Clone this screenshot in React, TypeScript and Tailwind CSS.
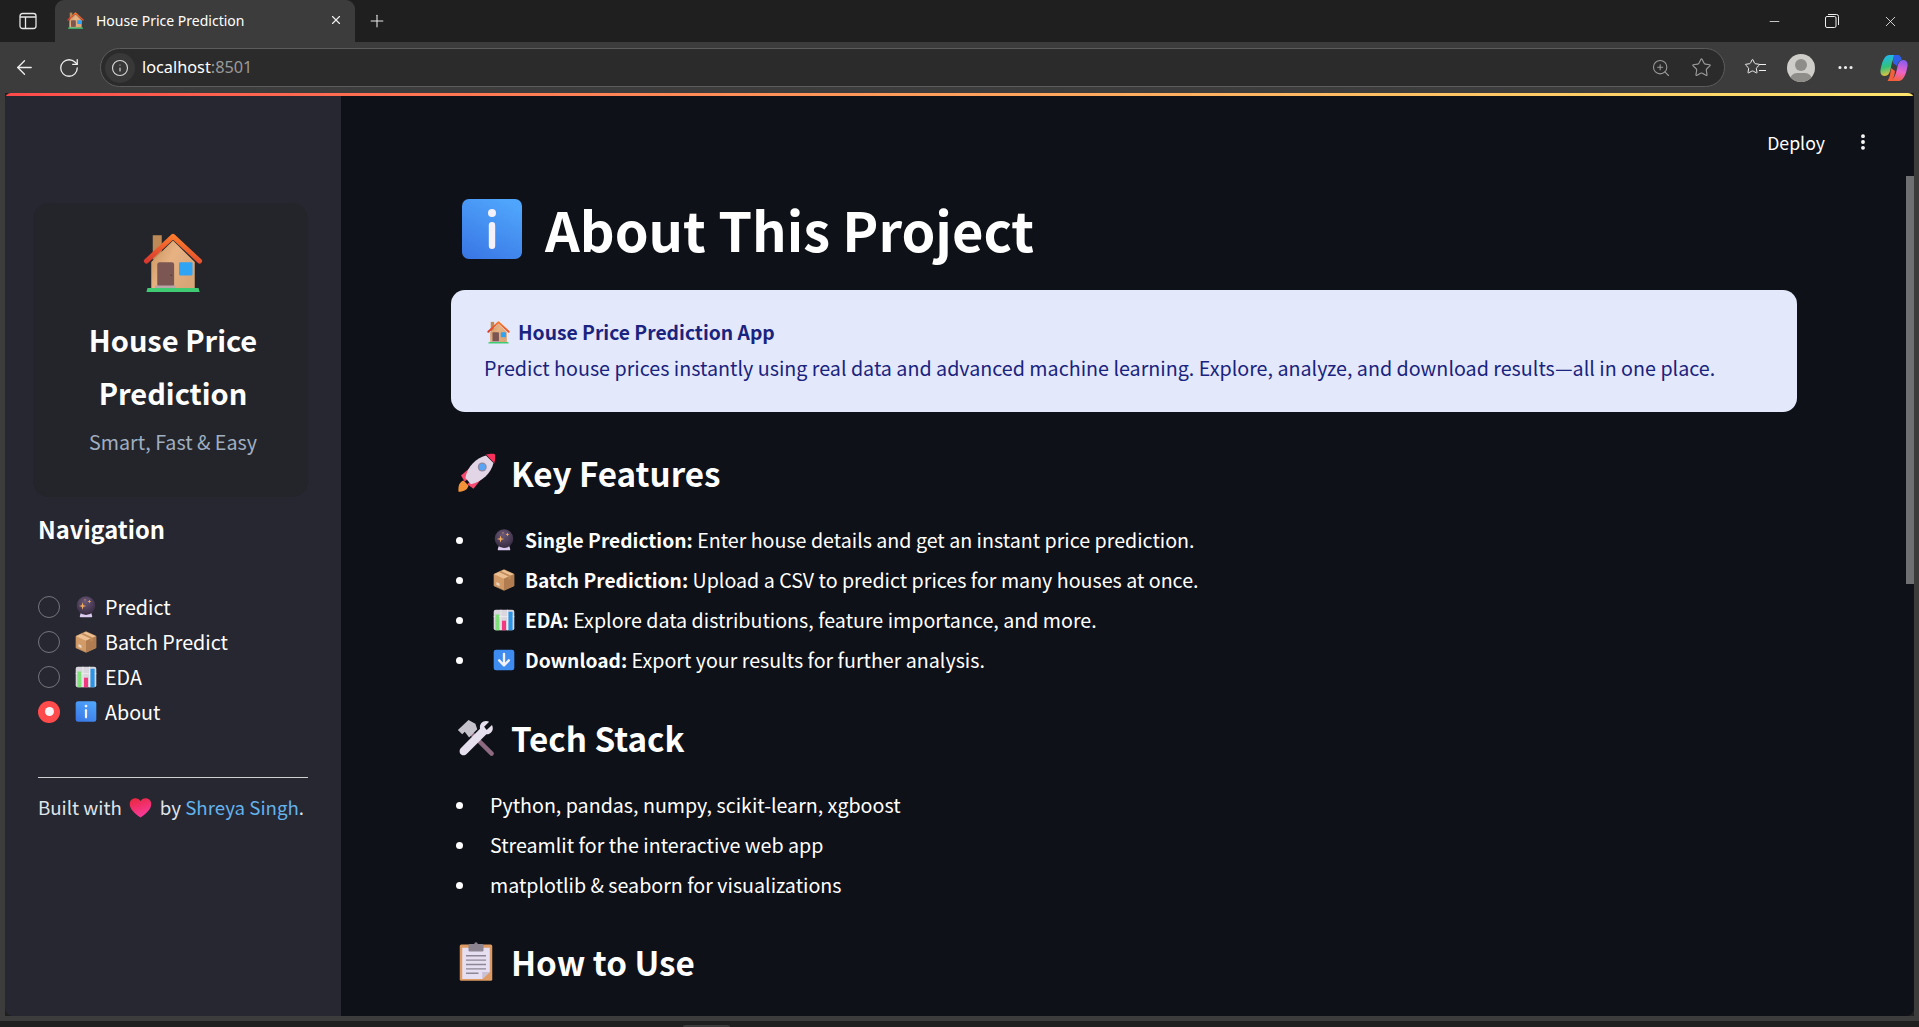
import { useId } from "react";
import { ArrowLeft, RotateCw, Info, ZoomIn, Star, Plus, X, Minus, MoreHorizontal, EllipsisVertical } from "lucide-react";

const useGid = () => useId().replace(/[^a-zA-Z0-9]/g, "");

function HouseEmoji({ className }: { className: string }) {
    const id = useGid();
    return (
        <svg viewBox="0 0 32 32" className={className}>
            <defs>
                <linearGradient id={`${id}w`} x1="0" y1="0" x2="1" y2="0.6">
                    <stop offset="0" stopColor="#c4905a" />
                    <stop offset="0.5" stopColor="#e8b283" />
                    <stop offset="1" stopColor="#d9a678" />
                </linearGradient>
                <linearGradient id={`${id}r`} x1="0" y1="1" x2="0.5" y2="0">
                    <stop offset="0" stopColor="#d9382e" />
                    <stop offset="1" stopColor="#fb7a2c" />
                </linearGradient>
            </defs>
            <rect x="5.2" y="1.2" width="4.8" height="13" fill="#bd8a57" />
            <path d="M16 4 L27.6 15.5 V29.5 H4.4 V15.5 Z" fill={`url(#${id}w)`} />
            <path d="M1.8 15 L16 1.8 L30.2 15" fill="none" stroke={`url(#${id}r)`} strokeWidth="2.6" strokeLinecap="round" strokeLinejoin="round" />
            <rect x="7.6" y="15.6" width="9" height="13" rx="1.2" fill="#7c5652" />
            <circle cx="15" cy="22.5" r="0.4" fill="#4b2f2d" />
            <rect x="19.2" y="15.6" width="7.2" height="7" rx="0.6" fill="#2fa4f5" />
            <rect x="6.4" y="28" width="11" height="1.4" fill="#b9a6a6" />
            <path d="M2.4 29.3 H29.6 L30.2 31.4 H1.8 Z" fill="#3fcb71" />
        </svg>
    );
}

function BallEmoji({ className }: { className: string }) {
    const id = useGid();
    return (
        <svg viewBox="0 0 32 32" className={className}>
            <defs>
                <radialGradient id={`${id}b`} cx="0.45" cy="0.3" r="0.75">
                    <stop offset="0" stopColor="#6a5878" />
                    <stop offset="1" stopColor="#33283d" />
                </radialGradient>
            </defs>
            <path d="M9 23 H23 L25 29 Q25.5 31 23.5 31 H8.5 Q6.5 31 7 29 Z" fill="#dccbf0" />
            <circle cx="16" cy="14" r="13.5" fill={`url(#${id}b)`} />
            <path d="M11 9 L12.2 13.3 L16.5 14.5 L12.2 15.7 L11 20 L9.8 15.7 L5.5 14.5 L9.8 13.3 Z" fill="#f3ad61" />
            <path d="M21 5 l0.8 2.2 l2.2 0.8 l-2.2 0.8 l-0.8 2.2 l-0.8 -2.2 l-2.2 -0.8 l2.2 -0.8 Z" fill="#f3ad61" />
            <circle cx="14.5" cy="5.5" r="0.9" fill="#f3ad61" />
        </svg>
    );
}

function BoxEmoji({ className }: { className: string }) {
    return (
        <svg viewBox="0 0 32 32" className={className}>
            <path d="M16 1 L30.5 7.5 V24.5 L16 31 L1.5 24.5 V7.5 Z" fill="#d19a66" stroke="#d19a66" strokeWidth="1" strokeLinejoin="round" />
            <path d="M16 1 L30.5 7.5 L16 14 L1.5 7.5 Z" fill="#ecc093" />
            <path d="M16 14 L30.5 7.5 V24.5 L16 31 Z" fill="#b07c50" />
            <path d="M8.5 4.4 L22.5 11 V15.5 L25.5 14 V9.6 L11.5 3 Z" fill="#c08c5a" />
            <path d="M5 19 L9.5 21 V25 L5 23 Z" fill="#e8d5c2" />
        </svg>
    );
}

function ChartEmoji({ className }: { className: string }) {
    return (
        <svg viewBox="0 0 32 32" className={className}>
            <rect x="1" y="1" width="30" height="30" rx="3" fill="#d9d6de" />
            <path d="M11.5 1 V31 M21 1 V31 M1 11 H31" stroke="#efedf2" strokeWidth="1.2" />
            <rect x="3.5" y="8" width="5.5" height="23" fill="#7fe07a" />
            <rect x="13" y="17" width="6" height="14" fill="#f0397f" />
            <rect x="22.5" y="4" width="6" height="27" fill="#2a94e6" />
        </svg>
    );
}

function InfoEmoji({ className }: { className: string }) {
    const id = useGid();
    return (
        <svg viewBox="0 0 32 32" className={className}>
            <defs>
                <linearGradient id={`${id}g`} x1="0.7" y1="0" x2="0.2" y2="1">
                    <stop offset="0" stopColor="#4fa5fb" />
                    <stop offset="1" stopColor="#3a78e6" />
                </linearGradient>
            </defs>
            <rect x="1" y="1" width="30" height="30" rx="3.5" fill={`url(#${id}g)`} />
            <circle cx="16" cy="8" r="2" fill="#f5f1fa" />
            <rect x="14.4" y="12.5" width="3.2" height="13.5" rx="1.6" fill="#f5f1fa" />
        </svg>
    );
}

function DownEmoji({ className }: { className: string }) {
    return (
        <svg viewBox="0 0 32 32" className={className}>
            <rect x="1" y="1" width="30" height="30" rx="3.5" fill="#3f8cf0" />
            <path d="M16 7 V23 M9 16.5 L16 24 L23 16.5" fill="none" stroke="#f5f1fa" strokeWidth="3.4" strokeLinejoin="round" strokeLinecap="round" />
        </svg>
    );
}

function RocketEmoji({ className }: { className: string }) {
    return (
        <svg viewBox="0 0 32 32" className={className}>
            <path d="M2 31 C1.5 26 3 23 6 22 L10 26 C9.5 29 6.5 31 2 31 Z" fill="#f2933a" />
            <path d="M4 18 L11 12 L11 19 L7 23 Z" fill="#f8486f" />
            <path d="M14 28.5 L20 21 L13 21 L9 25 Z" fill="#f8486f" />
            <path d="M7.5 20 C9 11 16 4 24 2 L30 8 C28 16 21 23 12 25 Z" fill="#e2d6e6" />
            <path d="M24 1.2 C27 0.6 30 0.4 31 1 C31.6 2 31.4 5 30.7 8.2 Z" fill="#f8315c" />
            <circle cx="21" cy="11.2" r="3.6" fill="#8f8aa0" />
            <circle cx="21" cy="11.2" r="2.6" fill="#5aa4f5" />
        </svg>
    );
}

function ToolsEmoji({ className }: { className: string }) {
    return (
        <svg viewBox="0 0 32 32" className={className}>
            <path d="M11 11 L28.5 28.5" stroke="#8d6a80" strokeWidth="3.6" strokeLinecap="round" />
            <path d="M1.5 9.5 L10 1.5 L15.5 4.5 L17 9 L10.5 15.5 L7 11 L5 13 Z" fill="#c6c2cc" />
            <path d="M26.5 3 L22.5 7 L24.5 9.5 L28.8 5.5 C30.6 9 28.5 13 24.3 13 L8.5 28.8 C6.8 30.6 3.5 29.8 3 27.5 C2.6 26 3.2 24.8 4 24 L19.2 8.5 C18.5 4 22.5 1.2 26.5 3 Z" fill="#e6e0ee" />
        </svg>
    );
}

function ClipboardEmoji({ className }: { className: string }) {
    return (
        <svg viewBox="0 0 32 32" className={className}>
            <rect x="3" y="2" width="26" height="29" rx="1.2" fill="#dd9b63" />
            <path d="M5 4.5 H27 V24 L21 29.5 H5 Z" fill="#e6dff2" />
            <path d="M21 29.5 V24 H27 Z" fill="#c9c0d4" />
            <rect x="10" y="1.5" width="12" height="6" rx="0.8" fill="#8c848f" />
            <circle cx="16" cy="1.5" r="1.4" fill="#8c848f" />
            <path d="M8 11 H24 M8 14.5 H24 M8 18 H24 M8 21.5 H24 M8 25 H18" stroke="#8d8694" strokeWidth="1.1" />
        </svg>
    );
}

function HeartEmoji({ className }: { className: string }) {
    const id = useGid();
    return (
        <svg viewBox="0 0 32 32" className={className}>
            <defs>
                <linearGradient id={`${id}h`} x1="0.2" y1="0" x2="0.6" y2="1">
                    <stop offset="0" stopColor="#e8283f" />
                    <stop offset="1" stopColor="#fb3ba0" />
                </linearGradient>
            </defs>
            <path d="M16 30 C6 23 1 17 1 11 C1 6 5 3 9 3 C12 3 14.6 4.6 16 7 C17.4 4.6 20 3 23 3 C27 3 31 6 31 11 C31 17 26 23 16 30 Z" fill={`url(#${id}h)`} />
        </svg>
    );
}

function TabStrip() {
    return (
        <div className="h-[42px] shrink-0 flex bg-[#1f1f1f] items-stretch">
            <div className="w-[55px] flex items-center justify-center">
                <svg viewBox="0 0 18 18" className="w-[18px] h-[18px]" fill="none" stroke="#e6e6e6" strokeWidth="1.3">
                    <rect x="1" y="1.5" width="16" height="15" rx="2.5" />
                    <path d="M6.5 5 V16 M1 5 H17" />
                </svg>
            </div>
            <div className="w-[300px] bg-[#3c3c3c] rounded-t-[9px] flex items-center pl-[12px] pr-[12px] pb-[2px] gap-[12px] text-[14px] text-white font-['Noto_Sans',sans-serif]">
                <HouseEmoji className="w-[17px] h-[17px] shrink-0" />
                <span className="flex-1">House Price Prediction</span>
                <X className="w-[14px] h-[14px] text-[#eee]" strokeWidth={2} />
            </div>
            <div className="flex items-center pl-[12px]">
                <Plus className="w-[20px] h-[20px] text-[#e8e8e8]" strokeWidth={1.3} />
            </div>
            <div className="ml-auto flex items-center">
                <div className="w-[58px] flex justify-center">
                    <Minus className="w-[15px] h-[15px] text-white" strokeWidth={1.2} />
                </div>
                <div className="w-[58px] flex justify-center">
                    <svg viewBox="0 0 14 14" className="w-[14px] h-[14px]" fill="none" stroke="#eee" strokeWidth="1">
                        <rect x="0.5" y="2.5" width="10.5" height="11" rx="1.5" />
                        <path d="M3 0.5 H11.5 Q13.5 0.5 13.5 2.5 V11" />
                    </svg>
                </div>
                <div className="w-[58px] flex justify-center">
                    <X className="w-[17px] h-[17px] text-[#eee]" strokeWidth={1.2} />
                </div>
            </div>
        </div>
    );
}

function Toolbar() {
    return (
        <div className="h-[51px] shrink-0 bg-[#3c3c3c] flex items-center pl-[13px] pr-[11px]">
            <ArrowLeft className="w-[23px] h-[23px] text-[#eee]" strokeWidth={1.4} />
            <RotateCw className="w-[22px] h-[22px] text-[#eee] ml-[22px]" strokeWidth={1.4} />
            <div className="ml-[20px] flex-1 h-[39px] rounded-full border border-[#5c5c5c] bg-[#2b2b2b] flex items-center pl-[4px] pr-[12px]">
                <div className="w-[30px] h-[30px] rounded-full bg-[#383838] flex items-center justify-center">
                    <Info className="w-[18px] h-[18px] text-[#d8d8d8]" strokeWidth={1.5} />
                </div>
                <span className="ml-[7px] text-[16.3px] text-white font-['Noto_Sans',sans-serif]">
                    localhost<span className="text-[#9a9a9a]">:8501</span>
                </span>
                <ZoomIn className="ml-auto w-[20px] h-[20px] text-[#9a9a9a]" strokeWidth={1.3} />
                <Star className="ml-[20px] w-[21px] h-[21px] text-[#9a9a9a]" strokeWidth={1.3} />
            </div>
            <div className="ml-[19px] relative w-[22px] h-[22px]">
                <Star className="w-[17px] h-[17px] mt-[1px] text-[#eee]" strokeWidth={1.4} />
                <div className="absolute right-0 top-[7px] w-[7px] h-[7px] border-y border-[#eee]" />
            </div>
            <div className="ml-[21px] w-[28px] h-[28px] rounded-full bg-[#cfcdc9] overflow-hidden flex flex-col items-center">
                <div className="w-[12px] h-[12px] rounded-full bg-[#8f8d89] mt-[5px] shrink-0" />
                <div className="w-[22px] h-[14px] rounded-full bg-[#8f8d89] mt-[2px] shrink-0" />
            </div>
            <MoreHorizontal className="ml-[21px] w-[19px] h-[19px] text-[#eee]" strokeWidth={2} />
            <svg viewBox="0 0 28 28" className="ml-[25px] w-[28px] h-[28px]">
                <defs>
                    <linearGradient id="cpA" x1="0.3" y1="0" x2="0.5" y2="1">
                        <stop offset="0" stopColor="#1fb6f5" />
                        <stop offset="0.55" stopColor="#32c27a" />
                        <stop offset="1" stopColor="#f5c23a" />
                    </linearGradient>
                    <linearGradient id="cpB" x1="0.6" y1="0" x2="0.4" y2="1">
                        <stop offset="0" stopColor="#8a5cf0" />
                        <stop offset="0.55" stopColor="#ee63c7" />
                        <stop offset="1" stopColor="#f5603a" />
                    </linearGradient>
                </defs>
                <path d="M9 1 H17 C13 3 12 8 11 13 C10 18 9 22 4.5 22 C1.5 22 0 19 0.5 16 C1.5 10 4 1 9 1 Z" fill="url(#cpA)" />
                <path d="M19 27 H10 C14 25 16 20 17 15 C18 10 19 6 23.5 6 C26.5 6 28 9 27.5 12 C26.5 18 24 27 19 27 Z" fill="url(#cpB)" />
                <path d="M14 1 H18 C20 1 21 3 22 6 C19.5 6 18 8 17 12 L13 9 C13 6 13 3 14 1 Z" fill="#2f5fe8" />
                <path d="M15 17 L11 14 C10.5 19 10 23 7.5 27 H11 C13 25.5 14.5 22 15 17 Z" fill="#f5603a" />
            </svg>
        </div>
    );
}

const radios = [
    { label: "Predict", icon: <BallEmoji className="w-[22px] h-[22px]" />, on: false },
    { label: "Batch Predict", icon: <BoxEmoji className="w-[22px] h-[22px]" />, on: false },
    { label: "EDA", icon: <ChartEmoji className="w-[22px] h-[22px]" />, on: false },
    { label: "About", icon: <InfoEmoji className="w-[23px] h-[23px]" />, on: true },
];

function Sidebar() {
    return (
        <aside className="w-[336px] shrink-0 bg-[#262730] pl-[28px] pt-[107px] text-white">
            <div className="w-[275px] h-[294px] rounded-[16px] bg-[#23252b] flex flex-col items-center pt-[30px] pl-[5px]">
                <HouseEmoji className="w-[60px] h-[60px]" />
                <div className="mt-[20px] text-[29px] leading-[53px] font-bold text-center w-[200px]">House Price Prediction</div>
                <div className="mt-[8px] text-[19.7px] leading-[30px] text-[#a0aec0]">Smart, Fast &amp; Easy</div>
            </div>
            <div className="mt-[14px] ml-[5px] text-[23.7px] leading-[36px] font-semibold">Navigation</div>
            <div className="mt-[42px] ml-[5px] flex flex-col">
                {radios.map((r) => (
                    <div key={r.label} className="h-[35px] flex items-center">
                        {r.on ? (
                            <div className="w-[22px] h-[22px] rounded-full bg-[#ff4b4b] flex items-center justify-center">
                                <div className="w-[9px] h-[9px] rounded-full bg-[#f5f5f8]" />
                            </div>
                        ) : (
                            <div className="w-[22px] h-[22px] rounded-full border-[1.5px] border-[#74757c]" />
                        )}
                        <div className="w-[22px] ml-[15px] flex justify-center">{r.icon}</div>
                        <span className="ml-[8px] text-[19.7px] leading-[30px]">{r.label}</span>
                    </div>
                ))}
            </div>
            <hr className="mt-[48px] ml-[5px] w-[270px] border-t border-[#cfcfd2]" />
            <div className="mt-[14px] ml-[5px] flex items-center whitespace-nowrap text-[18.7px] leading-[30px] text-[#dfe3ea]">
                Built with
                <HeartEmoji className="w-[23px] h-[23px] ml-[7px] mr-[8px] shrink-0" />
                by&nbsp;<span className="text-[#63b3ed]">Shreya Singh</span>.
            </div>
        </aside>
    );
}

function Bullet({ children }: { children: React.ReactNode }) {
    return (
        <li className="h-[40px] flex items-center text-[19.65px] text-white whitespace-nowrap">
            <span className="w-[7px] h-[7px] rounded-full bg-white ml-[5px] mr-[27px] shrink-0" />
            {children}
        </li>
    );
}

function FeatureRow({ icon, title, text }: { icon: React.ReactNode; title: string; text: string }) {
    return (
        <Bullet>
            {icon}
            <strong className="font-semibold text-[19.2px] ml-[9px]">{title}</strong>
            <span>&nbsp;{text}</span>
        </Bullet>
    );
}

function Main() {
    const emoji = "w-[22px] h-[22px] ml-[3px] mr-[1px]";
    return (
        <main className="flex-1 relative overflow-hidden bg-[#0e1117] text-white pl-[110px]">
            {/* Streamlit header */}
            <div className="absolute top-[32px] right-[41px] flex items-center gap-[28px]">
                <span className="text-[17.7px] leading-[28px]">Deploy</span>
                <EllipsisVertical className="w-[20px] h-[20px] text-white" strokeWidth={2.6} />
            </div>
            <div className="absolute top-[80px] right-0 w-[8px] h-[408px] bg-[#6f7072]" />

            <div className="w-[1346px] pt-[102px]">
                <h1 className="flex items-center pl-[9px] h-[62px] text-[54.2px] leading-[62px] font-bold">
                    <InfoEmoji className="w-[64px] h-[64px] shrink-0" />
                    <span className="ml-[21px]">About This Project</span>
                </h1>
                <div className="mt-[30px] h-[122px] rounded-[14px] bg-[#e3e9fb] text-[#1a237e] px-[33px] pt-[25px]">
                    <div className="flex items-center h-[34px] text-[19.3px] font-semibold">
                        <HouseEmoji className="w-[23px] h-[23px] ml-[3px]" />
                        <span className="ml-[8px]">House Price Prediction App</span>
                    </div>
                    <div className="text-[19.7px] leading-[36px] mt-[1px]">
                        Predict house prices instantly using real data and advanced machine learning. Explore, analyze, and download results—all in one place.
                    </div>
                </div>

                <h2 className="mt-[38px] h-[46px] flex items-center pl-[5px] text-[33.2px] font-semibold">
                    <RocketEmoji className="w-[40px] h-[40px]" />
                    <span className="ml-[15px]">Key Features</span>
                </h2>
                <ul className="mt-[24px] flex flex-col">
                    <FeatureRow icon={<BallEmoji className={emoji} />} title="Single Prediction:" text="Enter house details and get an instant price prediction." />
                    <FeatureRow icon={<BoxEmoji className={emoji} />} title="Batch Prediction:" text="Upload a CSV to predict prices for many houses at once." />
                    <FeatureRow icon={<ChartEmoji className={emoji} />} title="EDA:" text="Explore data distributions, feature importance, and more." />
                    <FeatureRow icon={<DownEmoji className={emoji} />} title="Download:" text="Export your results for further analysis." />
                </ul>

                <h2 className="mt-[35px] h-[46px] flex items-center pl-[5px] text-[33.2px] font-semibold">
                    <ToolsEmoji className="w-[40px] h-[40px]" />
                    <span className="ml-[15px]">Tech Stack</span>
                </h2>
                <ul className="mt-[24px] flex flex-col">
                    <Bullet>Python, pandas, numpy, scikit-learn, xgboost</Bullet>
                    <Bullet>Streamlit for the interactive web app</Bullet>
                    <Bullet>matplotlib &amp; seaborn for visualizations</Bullet>
                </ul>

                <h2 className="mt-[34px] h-[46px] flex items-center pl-[5px] text-[33.2px] font-semibold">
                    <ClipboardEmoji className="w-[40px] h-[40px]" />
                    <span className="ml-[15px]">How to Use</span>
                </h2>
            </div>
        </main>
    );
}

export default function App() {
    return (
        <div className="h-screen flex flex-col bg-[#1f1f1f] overflow-hidden font-['Noto_Sans_CJK_JP','Noto_Sans',sans-serif]">
            <TabStrip />
            <Toolbar />
            <div className="mx-[5px] flex-1 flex flex-col rounded-t-[6px] rounded-b-[8px] overflow-hidden mb-[11px] relative">
                <div className="h-[3px] shrink-0 bg-gradient-to-r from-[#ff4b4b] to-[#ffe66d]" />
                <div className="flex-1 flex min-h-0">
                    <Sidebar />
                    <Main />
                </div>
            </div>
            <div className="absolute -z-0 bottom-[6px] left-0 right-0 h-[5px] bg-[#3c3c3c]" />
            <div className="absolute top-[93px] bottom-[6px] left-0 w-[5px] bg-[#3c3c3c]" />
            <div className="absolute top-[93px] bottom-[6px] right-0 w-[5px] bg-[#3c3c3c]" />
            <div className="absolute bottom-0 left-[683px] w-[47px] h-[2px] rounded-t-[3px] bg-[#3c3c3c]" />
        </div>
    );
}
